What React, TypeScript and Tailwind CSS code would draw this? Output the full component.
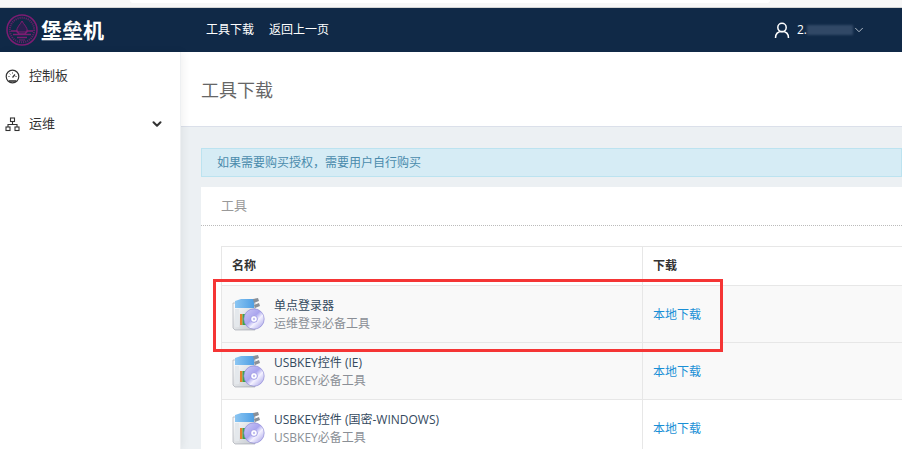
import { ChevronDown } from 'lucide-react';

const font = { fontFamily: '"Open Sans", "Noto Sans CJK SC", sans-serif' };

const tools = [
  { name: '单点登录器', note: '运维登录必备工具', shaded: true },
  { name: 'USBKEY控件 (IE)', note: 'USBKEY必备工具', shaded: true },
  { name: 'USBKEY控件 (国密-WINDOWS)', note: 'USBKEY必备工具', shaded: false },
];

function Logo() {
  return (
    <svg width="32" height="32" viewBox="0 0 32 32" fill="none" stroke="#7d1c72">
      <circle cx="16" cy="16" r="15" strokeWidth="1.5" />
      <circle cx="16" cy="16" r="12.2" strokeWidth="2" strokeDasharray="1.2 0.9" opacity="0.75" />
      <path d="M16 7c-2 4-5.500 6-5.500 11h11C21.500 13 18 11 16 7z" strokeWidth="1" fill="#2a1f4f" />
      <path d="M5 17h6l2 3h6l2-3h6M7 20.500h18M11 23.500h10" strokeWidth="1.5" />
      <path d="M13 26h6" strokeWidth="1" />
    </svg>
  );
}

function GaugeIcon() {
  return (
    <svg width="15" height="15" viewBox="0 0 15 15" fill="none" stroke="#333" className="mr-[9px] flex-shrink-0">
      <circle cx="7.500" cy="7.500" r="6.300" strokeWidth="1.200" />
      <path d="M7.500 8.500l2.500-3" strokeWidth="1.200" />
      <path d="M3.500 7.500h1M10.500 7.500h1M7.500 3.500v1M4.700 4.700l.7.700" strokeWidth="1" />
      <path d="M4 12h7" strokeWidth="1.600" />
    </svg>
  );
}

function SitemapIcon() {
  return (
    <svg width="15" height="15" viewBox="0 0 15 15" fill="none" stroke="#333" strokeWidth="1.100" className="mr-[9px] flex-shrink-0">
      <rect x="5.500" y="1" width="4" height="3.500" />
      <rect x="1" y="10" width="4" height="3.500" />
      <rect x="10" y="10" width="4" height="3.500" />
      <path d="M7.500 4.500v3M3 10V7.500h9V10" />
    </svg>
  );
}

function DiscIcon() {
  return (
    <svg width="33" height="35" viewBox="0 0 33 35" className="flex-shrink-0">
      <defs>
        <linearGradient id="box" x1="0" y1="0" x2="1" y2="1">
          <stop offset="0" stopColor="#ffffff" />
          <stop offset="1" stopColor="#c2c7cd" />
        </linearGradient>
        <linearGradient id="lid" x1="0" y1="0" x2="1" y2="0">
          <stop offset="0" stopColor="#8cc6f2" />
          <stop offset="1" stopColor="#4f9fe4" />
        </linearGradient>
        <linearGradient id="cd" x1="0" y1="0" x2="1" y2="1">
          <stop offset="0" stopColor="#cfccf8" />
          <stop offset="0.45" stopColor="#aaa5ee" />
          <stop offset="0.62" stopColor="#f4f2ff" />
          <stop offset="1" stopColor="#9c97e4" />
        </linearGradient>
      </defs>
      <path d="M1 6h22v27H3l-2-2z" fill="url(#box)" stroke="#9aa0a8" strokeWidth="0.6" />
      <path d="M3 4l6-2h13v9H3z" fill="url(#lid)" />
      <path d="M21 2l5-1 1 3-5 2zM22 8l5-2 1 3-5 2z" fill="#8a9098" />
      <rect x="3" y="12" width="4" height="18" fill="#e4e8ec" />
      <rect x="8" y="17" width="2.500" height="11" fill="#e57f2a" />
      <rect x="10.500" y="17" width="3.500" height="11" fill="#39a648" />
      <circle cx="22" cy="22" r="10.200" fill="url(#cd)" stroke="#8580d2" strokeWidth="0.6" />
      <circle cx="22" cy="22" r="3.400" fill="#fff" stroke="#8f8ae0" strokeWidth="0.8" />
      <circle cx="22" cy="22" r="1.200" fill="#c4c0f2" />
    </svg>
  );
}

export default function App() {
  return (
    <div className="relative h-[449px] w-[902px] overflow-hidden bg-white" style={font}>
      <div className="flex h-[8px] border-b border-[#d4d4d4] bg-[#f7f7f7]">
        <div className="ml-[130px] h-[3px] w-[640px] rounded-b bg-white" />
      </div>

      <header className="flex h-[44px] items-center bg-[#102947] text-white">
        <div className="flex w-[206px] items-center gap-[3px] pl-[6px]">
          <Logo />
          <span className="text-[21px] leading-none font-bold">堡垒机</span>
        </div>
        <nav className="flex gap-[15px] text-xs">
          <span>工具下载</span>
          <span>返回上一页</span>
        </nav>
        <div className="ml-auto mr-[36px] flex items-center text-xs">
          <svg width="16" height="17" viewBox="0 0 16 17" fill="none" stroke="#fff" strokeWidth="1.500" className="mr-[7px]">
            <circle cx="8" cy="5.500" r="4.200" />
            <path d="M1.500 16c0-4 2.500-6.500 6.500-6.500s6.500 2.500 6.500 6.500" />
          </svg>
          <span>2.</span>
          <span className="h-[10px] w-[46px] bg-[#3a506e]/80 blur-[1px]" />
          <ChevronDown size={14} strokeWidth={1.5} className="ml-[-1px] text-[#c8d0da]" />
        </div>
      </header>

      <div className="flex h-[397px]">
        <aside className="z-10 w-[181px] flex-shrink-0 border-r border-[#eef0f2] bg-white text-[13px] text-[#333] shadow-[2px_0_8px_rgba(0,0,0,0.06)]">
          <div className="flex h-[48px] items-center pl-[5px]">
            <GaugeIcon />
            <span>控制板</span>
          </div>
          <div className="flex h-[48px] items-center pl-[5px] pr-[16px]">
            <SitemapIcon />
            <span>运维</span>
            <ChevronDown size={14} strokeWidth={3.5} className="ml-auto" />
          </div>
        </aside>

        <main className="min-w-0 flex-1 bg-[#ecf0f3]">
          <div className="flex h-[75px] items-center border-b border-[#dbe0ea] bg-white pl-[20px] pt-[1px] text-lg text-[#666]">
            工具下载
          </div>
          <div className="pl-[20px] pt-[21px]">
            <div className="flex h-[29px] items-center border border-[#bce3f0] bg-[#d6ecf5] pl-[15px] text-xs text-[#4a8bac]">
              如果需要购买授权，需要用户自行购买
            </div>
            <section className="mt-[10px] bg-white">
              <div className="flex h-[39px] items-center border-b border-dotted border-[#bbb] pl-[20px] text-[13px] text-[#999]">
                工具
              </div>
              <div className="pl-[20px] pt-[20px]">
                <table className="w-[700px] border-collapse text-xs">
                  <thead>
                    <tr className="h-[39px] text-left text-[#333]">
                      <th className="w-[421px] border border-[#e7e7e7] pl-[10px] font-bold">名称</th>
                      <th className="border border-[#e7e7e7] pl-[10px] font-bold">下载</th>
                    </tr>
                  </thead>
                  <tbody>
                    {tools.map((tool) => (
                      <tr key={tool.name} className={tool.shaded ? 'h-[57px] bg-[#f9f9f9]' : 'h-[57px] bg-white'}>
                        <td className="border border-[#e7e7e7] pl-[10px]">
                          <div className="flex items-center gap-[9px]">
                            <DiscIcon />
                            <div className="pt-[1px]">
                              <p className="leading-[18px] text-[#34495e]">{tool.name}</p>
                              <p className="leading-[18px] text-[#8a8f96]">{tool.note}</p>
                            </div>
                          </div>
                        </td>
                        <td className="border border-[#e7e7e7] pl-[10px] pt-[2px] text-[#1a8fd6]">本地下载</td>
                      </tr>
                    ))}
                  </tbody>
                </table>
              </div>
            </section>
          </div>
        </main>
      </div>

      <div className="absolute left-[213px] top-[279px] h-[73px] w-[510px] border-[3px] border-[#f53535]" />
    </div>
  );
}
